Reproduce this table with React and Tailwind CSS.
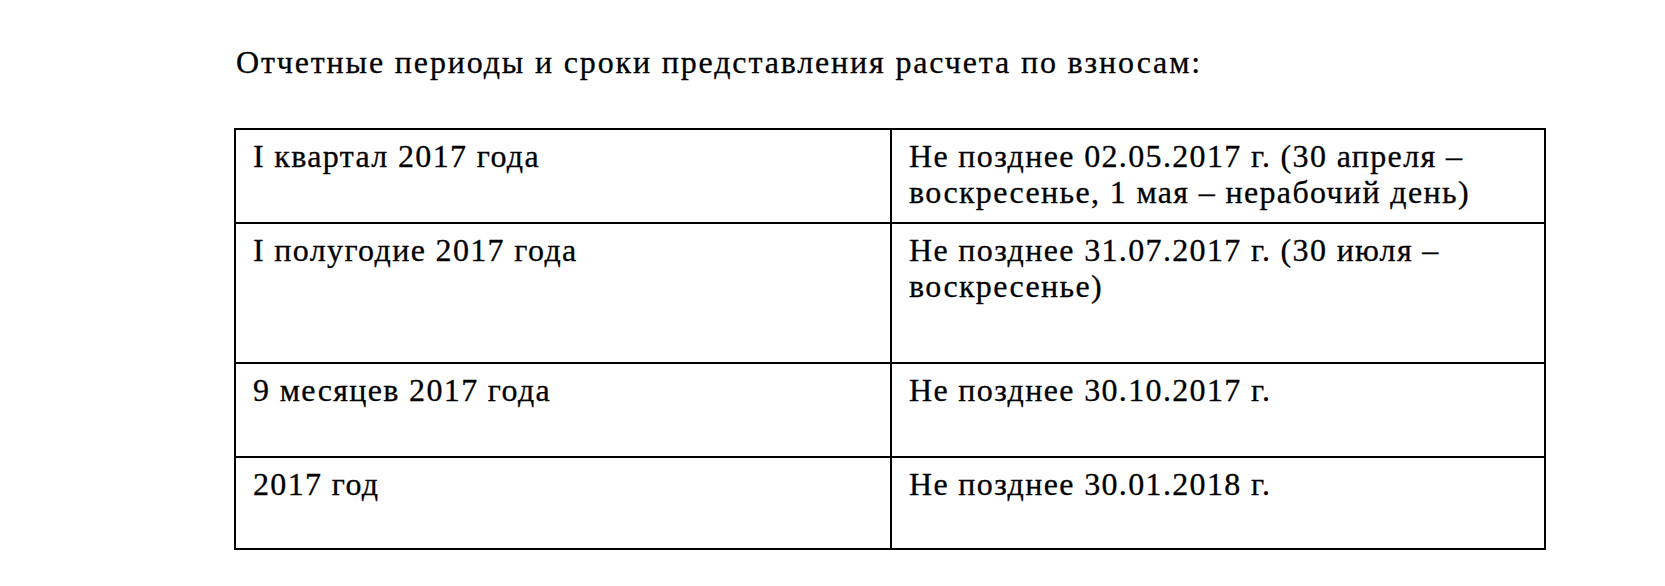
export default function App() {
  const rows = [
    { a: "I квартал 2017 года", b: ["Не позднее 02.05.2017 г. (30 апреля –", "воскресенье, 1 мая – нерабочий день)"], h: "h-[94px]" },
    { a: "I полугодие 2017 года", b: ["Не позднее 31.07.2017 г. (30 июля –", "воскресенье)"], h: "h-[140px]" },
    { a: "9 месяцев 2017 года", b: ["Не позднее 30.10.2017 г."], h: "h-[94px]" },
    { a: "2017 год", b: ["Не позднее 30.01.2018 г."], h: "h-[92px]" },
  ];
  return (
    <div className="w-[1665px] h-[586px] bg-white text-black pl-[234px] pt-[44px] overflow-hidden [-webkit-text-stroke:0.3px_black]" style={{ fontFamily: '"Liberation Serif", "DejaVu Serif", serif' }}>
      <div className="text-[32px] leading-[36px] tracking-[1.85px] pl-[2px]">Отчетные периоды и сроки представления расчета по взносам:</div>
      <table className="mt-[48px] border-collapse w-[1312px] text-[32px] leading-[36px] tracking-[1.35px]">
        <tbody>
          {rows.map((r, i) => (
            <tr key={i} className={r.h}>
              <td className="border-2 border-black align-top w-[656px] pl-[17px] pt-[8px]">{r.a}</td>
              <td className="border-2 border-black align-top pl-[17px] pt-[8px]">
                {r.b.map((l, j) => (
                  <div key={j} className="whitespace-nowrap">{l}</div>
                ))}
              </td>
            </tr>
          ))}
        </tbody>
      </table>
    </div>
  );
}
